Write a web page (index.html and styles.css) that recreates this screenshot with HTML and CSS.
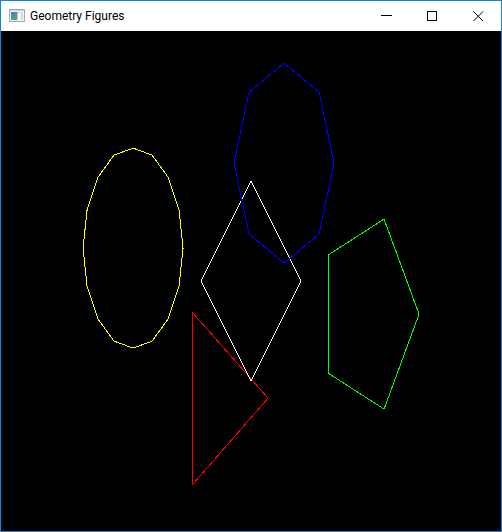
FILE: index.html
```html
<!DOCTYPE html>
<html lang="en">
<head>
<meta charset="utf-8">
<meta name="viewport" content="width=device-width, initial-scale=1">
<title>Geometry Figures</title>
<link rel="stylesheet" href="styles.css">
</head>
<body>
<main class="window">
  <header class="titlebar">
    <svg class="app-icon" width="16" height="16" viewBox="0 0 16 16" aria-hidden="true">
      <defs>
        <linearGradient id="screen" x1="0" y1="0" x2="1" y2="1">
          <stop offset="0" stop-color="#4a7fb5"/>
          <stop offset="1" stop-color="#4fae74"/>
        </linearGradient>
      </defs>
      <rect x="0" y="1" width="16" height="13" fill="#a4a8ac"/>
      <rect x="1" y="2" width="14" height="11" fill="#f1f2f4"/>
      <rect x="1" y="2" width="14" height="1" fill="#cfd3d8"/>
      <rect x="2" y="4" width="6" height="8" fill="url(#screen)"/>
      <rect x="8" y="4" width="3" height="8" fill="#b9c9d6"/>
      <rect x="9" y="5" width="2" height="7" fill="#ffffff"/>
      <rect x="12" y="4" width="2" height="8" fill="#d5dbe2"/>
    </svg>
    <h1 class="title">Geometry Figures</h1>
    <div class="controls">
      <button class="control" type="button" aria-label="Minimize">
        <svg width="11" height="11" viewBox="0 0 11 11"><path d="M0 4.5H11"/></svg>
      </button>
      <button class="control" type="button" aria-label="Maximize">
        <svg width="11" height="11" viewBox="0 0 11 11"><path d="M.5 .5H9.5V9.5H.5Z"/></svg>
      </button>
      <button class="control" type="button" aria-label="Close">
        <svg class="smooth" width="11" height="11" viewBox="0 0 11 11"><path d="M.5 .5L10 10M10 .5L.5 10"/></svg>
      </button>
    </div>
  </header>
  <svg class="scene" viewBox="0.45 0.4 500 500" preserveAspectRatio="none" role="img" aria-label="Triangle, diamond, pentagon, octagon and sixteen-sided polygon">
    <polygon class="red" points="267.5,367.5 191.5,454.5 191.5,281.5"/>
    <polygon class="green" points="418.5,283.5 383.5,188.5 327.5,224.5 327.5,342.5 383.5,378.5"/>
    <polygon class="white" points="250.5,150.5 300.5,250.5 250.5,350.5 200.5,250.5"/>
    <polygon class="blue" points="333.5,132.5 318.5,61.5 283.5,32.5 248.5,61.5 233.5,132.5 248.5,203.5 283.5,232.5 318.5,203.5"/>
    <polygon class="yellow" points="182.5,217.5 178.5,179.5 167.5,146.5 151.5,124.5 132.5,117.5 113.5,124.5 97.5,146.5 86.5,179.5 82.5,217.5 86.5,255.5 97.5,288.5 113.5,310.5 132.5,317.5 151.5,310.5 167.5,288.5 178.5,255.5"/>
  </svg>
</main>
</body>
</html>
```
FILE: styles.css
```css
* {
  box-sizing: border-box;
}

body {
  margin: 0;
}

.window {
  display: flex;
  flex-direction: column;
  height: 100vh;
  border: 1px solid #1883d7;
  background: #000;
}

.titlebar {
  display: flex;
  flex: none;
  align-items: center;
  height: 30px;
  padding-left: 8px;
  background: #fff;
}

.app-icon {
  flex: none;
  margin-right: 5px;
}

.title {
  flex: 1;
  margin: 0;
  font: 400 12px/16px Roboto, "Noto Sans", sans-serif;
  color: #000;
  white-space: nowrap;
}

.controls {
  display: flex;
  align-self: stretch;
}

.control {
  display: flex;
  align-items: center;
  justify-content: center;
  width: 46px;
  padding: 0;
  border: 0;
  background: none;
}

.control:hover {
  background: #e5e5e5;
}

.control svg {
  fill: none;
  stroke: #000;
  shape-rendering: crispEdges;
}

.control .smooth {
  shape-rendering: auto;
}

.scene {
  display: block;
  flex: 1;
  width: 100%;
  min-height: 0;
  fill: none;
  stroke-width: 1;
  shape-rendering: crispEdges;
}

.red { stroke: #f00; }
.green { stroke: #0f0; }
.white { stroke: #fff; }
.blue { stroke: #00f; }
.yellow { stroke: #ff0; }
```
